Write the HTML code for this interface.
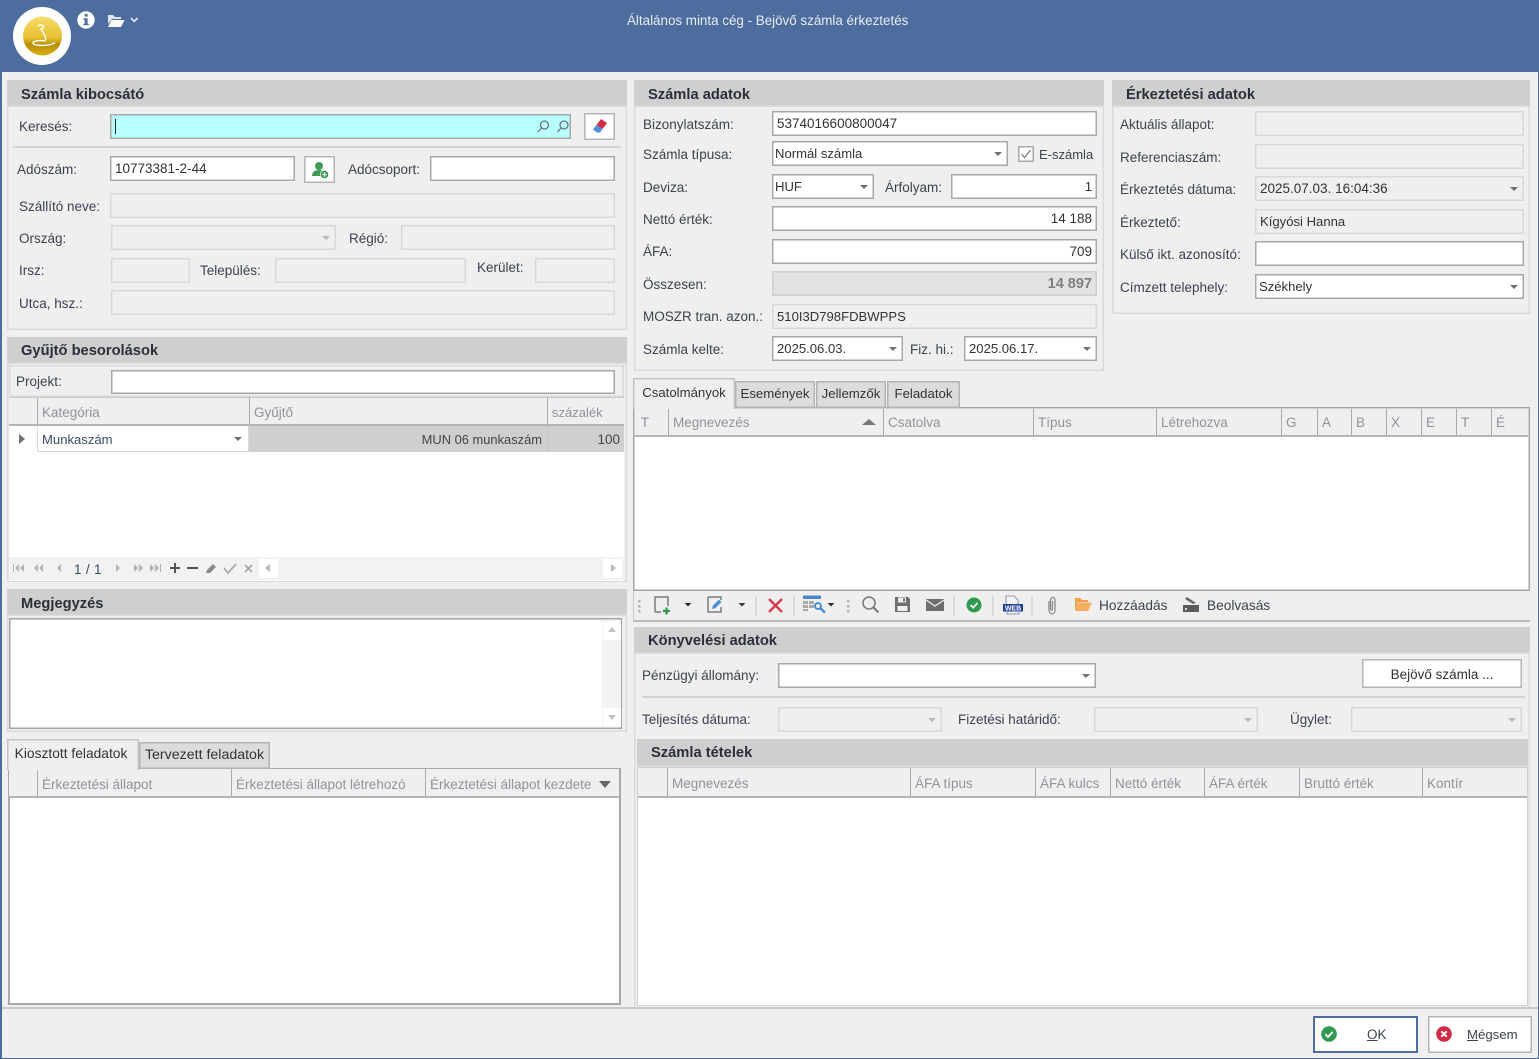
<!DOCTYPE html>
<html lang="hu"><head><meta charset="utf-8"><title>Általános minta cég - Bejövő számla érkeztetés</title>
<style>
html,body{margin:0;padding:0;width:1539px;height:1059px;overflow:hidden;background:#efefef}
body{font:13.5px/16px "Liberation Sans",sans-serif;color:#3c4250;position:relative}
div{position:absolute;box-sizing:border-box;white-space:nowrap}
svg{position:absolute;overflow:visible}
.p{box-shadow:inset 0 0 0 1.5px #dadada}
.h{background:#cfcfcf;font-weight:bold;font-size:14.7px;line-height:30px;color:#2a2f39;padding-left:14px;box-shadow:inset 0 -1.5px 0 #dcdcdc}
.t{height:16px;margin-top:1px}
.i,.d,.e{box-shadow:inset 0 0 0 1.5px #a8a8a8;background:#fff;line-height:26px;padding:0 5px;color:#333;font-size:13.1px}
.d{background:#efefef;box-shadow:inset 0 0 0 1.5px #d8d8d8}
.e{background:#efefef;box-shadow:inset 0 0 0 1.5px #cfcfcf}
.r{text-align:right}
.ar:after{content:"";position:absolute;right:6px;top:11px;border:4px solid transparent;border-top:4px solid #707070;border-bottom:0}
.dis:after{border-top-color:#b8b8b8}
.g{background:#fff;box-shadow:inset 0 0 0 2px #a9a9a9}
.gh{background:#efefef;border-bottom:2px solid #b4b4b4}
.c{top:0;bottom:0;border-left:1.5px solid #a9a9a9;color:#8f939c;padding-left:4px;line-height:27px}
.tab{background:#dcdcdc;box-shadow:inset 0 0 0 1.5px #b4b4b4;text-align:center;line-height:25px;color:#333;font-size:13.2px}
.tab.on{background:#efefef;line-height:29px}
.sep{background:#d2d2d2;height:2px}
.btn{background:#fff;box-shadow:inset 0 0 0 1.5px #b4b4b4}
</style></head><body>

<div style="left:0;top:0;width:1539px;height:72px;background:#4d6d9e"></div>
<div style="left:0;top:72px;width:1.5px;height:987px;background:#4d6d9e"></div>
<div style="left:1537.5px;top:72px;width:1.5px;height:987px;background:#4d6d9e"></div>
<div style="left:0;top:1057.5px;width:1539px;height:1.5px;background:#4d6d9e"></div>
<div style="left:627px;top:12.500px;color:#e6ecf5;font-size:13.4px">Általános minta cég - Bejövő számla érkeztetés</div>

<!-- logo -->
<svg style="left:13px;top:7px" width="60" height="60" viewBox="0 0 60 60">
<defs><linearGradient id="gd" x1="0" y1="0" x2="0" y2="1"><stop offset="0" stop-color="#f5dd6c"/><stop offset=".55" stop-color="#e6c030"/><stop offset=".72" stop-color="#b88e05"/><stop offset="1" stop-color="#d9b010"/></linearGradient></defs>
<circle cx="29" cy="29" r="29" fill="#fff"/><circle cx="29.500" cy="29" r="19.500" fill="url(#gd)"/>
<path d="M25 19q3-2 5 0q1 3-2 3q2 3 4 7q1 3 0 5M32 34c-6-1-12 0-12 2c0 3 14 3 19 1l3-1" fill="none" stroke="#fff" stroke-width="1.400"/>
</svg>
<svg style="left:77px;top:11px" width="18" height="18" viewBox="0 0 18 18"><circle cx="9" cy="9" r="8.700" fill="#fff"/><rect x="7.600" y="3" width="3" height="2.600" fill="#4d6d9e"/><path d="M6.500 7.200h4.100v5.600h1.200v1.500H6.500v-1.500h1.100V8.700H6.500z" fill="#4d6d9e"/></svg>
<svg style="left:107px;top:13px" width="33" height="15" viewBox="0 0 33 15"><path d="M1 2h5l2 2h6v2H5L1 11z" fill="#dfe6f0"/><path d="M4.500 7h13l-3.500 7H1z" fill="#fff"/><path d="M24 5l3.300 3.300L30.600 5" fill="none" stroke="#dfe6f0" stroke-width="1.700"/></svg>

<!-- Számla kibocsátó -->
<div class="p" style="left:7px;top:80px;width:620px;height:250px"></div>
<div class="h" style="left:7px;top:80px;width:620px;height:27px">Számla kibocsátó</div>
<div class="t" style="left:19px;top:118px">Keresés:</div>
<div class="i" style="left:110px;top:114px;width:461px;height:25px;background:#b8ffff"></div>
<div style="left:115px;top:119px;width:1px;height:15px;background:#222"></div>
<svg style="left:536px;top:119px" width="36" height="15" viewBox="0 0 36 15" fill="none" stroke="#6d7278" stroke-width="1.300"><circle cx="8.500" cy="6" r="4"/><path d="M5.500 9L2 13"/><circle cx="28" cy="6" r="4"/><path d="M25 9l-3.500 4"/></svg>
<div class="btn" style="left:584px;top:113px;width:31px;height:27px"></div>
<svg style="left:592px;top:118px" width="16" height="16" viewBox="0 0 16 16"><path d="M9 1l6 4-4.500 6-6-4z" fill="#d22b45"/><path d="M4.500 7l6 4-2.500 3.500H5L1 11.500z" fill="#4d8fd8"/></svg>
<div class="sep" style="left:13px;top:146px;width:608px"></div>
<div class="t" style="left:17px;top:161px">Adószám:</div>
<div class="i" style="left:110px;top:156px;width:185px;height:25px;font-size:13.500px">10773381-2-44</div>
<div class="btn" style="left:304px;top:156px;width:31px;height:27px"></div>
<svg style="left:311px;top:161px" width="19" height="19" viewBox="0 0 19 19"><circle cx="8" cy="5" r="4" fill="#3f9a55"/><path d="M1 15c0-4 3-6 7-6s6 2 6 6z" fill="#3f9a55"/><circle cx="13.500" cy="13.500" r="4.500" fill="#fff"/><circle cx="13.500" cy="13.500" r="3.800" fill="#2f9a4f"/><path d="M11.300 13.500h4.400M13.500 11.300v4.400" stroke="#fff" stroke-width="1.200"/></svg>
<div class="t" style="left:348px;top:161px">Adócsoport:</div>
<div class="i" style="left:430px;top:156px;width:185px;height:25px"></div>
<div class="t" style="left:19px;top:198px">Szállító neve:</div>
<div class="d" style="left:110px;top:193px;width:505px;height:25px"></div>
<div class="t" style="left:19px;top:230px">Ország:</div>
<div class="d ar dis" style="left:111px;top:225px;width:225px;height:25px"></div>
<div class="t" style="left:349px;top:230px">Régió:</div>
<div class="d" style="left:401px;top:225px;width:214px;height:25px"></div>
<div class="t" style="left:19px;top:262px">Irsz:</div>
<div class="d" style="left:111px;top:258px;width:79px;height:25px"></div>
<div class="t" style="left:200px;top:262px">Település:</div>
<div class="d" style="left:275px;top:258px;width:191px;height:25px"></div>
<div class="t" style="left:477px;top:259px">Kerület:</div>
<div class="d" style="left:535px;top:258px;width:80px;height:25px"></div>
<div class="t" style="left:19px;top:295px">Utca, hsz.:</div>
<div class="d" style="left:111px;top:290px;width:504px;height:25px"></div>

<!-- Gyűjtő -->
<div class="p" style="left:7px;top:337px;width:620px;height:245px"></div>
<div class="h" style="left:7px;top:337px;width:620px;height:27px;line-height:28px">Gyűjtő besorolások</div>
<div class="p" style="left:9px;top:365px;width:615px;height:32px"></div>
<div class="t" style="left:16px;top:373px">Projekt:</div>
<div class="i" style="left:111px;top:370px;width:504px;height:24px"></div>
<div style="left:9px;top:397px;width:615px;height:184px;background:#fff"></div>
<div class="gh" style="left:9px;top:397px;width:615px;height:29px;border-top:1.500px solid #c8c8c8">
<div class="c" style="left:28px;width:212px;line-height:29px">Kategória</div><div class="c" style="left:240px;width:298px;line-height:29px">Gyűjtő</div><div class="c" style="left:538px;width:77px;line-height:29px;font-size:13px">százalék</div></div>
<div style="left:19px;top:434px;border:5px solid transparent;border-left:6px solid #707070;border-right:0"></div>
<div style="left:37px;top:426px;width:212px;height:26px;border:1.500px solid #d8d8d8;border-top:0;line-height:27px;padding-left:4px;color:#3c4a6a;font-size:13.100px" class="ar">Munkaszám</div>
<div style="left:249px;top:426px;width:298px;height:26px;background:#cfcfcf;text-align:right;padding-right:5px;line-height:27px;color:#444;font-size:12.900px">MUN 06 munkaszám</div>
<div style="left:547px;top:426px;width:77px;height:26px;background:#cfcfcf;border-left:1px solid #c4c4c4;text-align:right;padding-right:4px;line-height:27px;color:#444">100</div>
<div style="left:9px;top:557px;width:615px;height:23px;background:#f2f2f2"></div>
<svg style="left:12px;top:562px" width="250" height="14" viewBox="0 0 250 14"><g fill="#b4b4b4"><path d="M1 2h1v8H1zM7 2v8L3 6zM12 2v8L8 6z"/><path d="M26 2v8l-4-4zM31 2v8l-4-4z"/><path d="M49 2v8l-4-4z"/><path d="M104 2v8l4-4zM122 2v8l4-4zM127 2v8l4-4zM138 2v8l4-4zM143 2v8l4-4zM148 2h1v8h-1z"/></g><path d="M158 6h10M163 1v10M175 6h11" stroke="#555" stroke-width="2"/><path d="M194 11l1-3 6-6 3 3-6 6z" fill="#888"/><path d="M212 6l4 5 8-9" fill="none" stroke="#a8a8a8" stroke-width="1.700"/><path d="M233 3l7 7M240 3l-7 7" stroke="#a8a8a8" stroke-width="1.700"/></svg>
<div class="t" style="left:74px;top:561px;font-size:13.500px;color:#3c4a6a;letter-spacing:.3px">1 / 1</div>
<div style="left:259px;top:559px;width:19px;height:19px;background:#fff"></div>
<div style="left:265px;top:564px;border:4.500px solid transparent;border-right:5px solid #b8b8b8;border-left:0"></div>
<div style="left:603px;top:559px;width:19px;height:19px;background:#fff"></div>
<div style="left:611px;top:564px;border:4.500px solid transparent;border-left:5px solid #b8b8b8;border-right:0"></div>

<!-- Megjegyzés -->
<div class="p" style="left:7px;top:589px;width:620px;height:143px"></div>
<div class="h" style="left:7px;top:589px;width:620px;height:27px">Megjegyzés</div>
<div class="g" style="left:9px;top:618px;width:613px;height:111px;box-shadow:inset 0 0 0 1.500px #a4a4a4"></div>
<div style="left:602px;top:620px;width:19px;height:107px;background:#f3f3f3"></div>
<div style="left:603px;top:621px;width:18px;height:19px;background:#fff"></div>
<div style="left:603px;top:708px;width:18px;height:19px;background:#fff"></div>
<div style="left:608px;top:627px;border:4px solid transparent;border-bottom:5px solid #c4c4c4;border-top:0"></div>
<div style="left:608px;top:715px;border:4px solid transparent;border-top:5px solid #c4c4c4;border-bottom:0"></div>

<!-- feladatok -->
<div class="g" style="left:8px;top:768px;width:613px;height:237px"></div>
<div class="gh" style="left:9px;top:769px;width:610px;height:29px">
<div class="c" style="left:28px;width:194px;line-height:31px">Érkeztetési állapot</div><div class="c" style="left:222px;width:194px;line-height:31px">Érkeztetési állapot létrehozó</div><div class="c" style="left:416px;width:194px;line-height:31px">Érkeztetési állapot kezdete</div></div>
<div style="left:599px;top:781px;border:6px solid transparent;border-top:7px solid #666;border-bottom:0"></div>
<div class="tab on" style="left:7px;top:739px;width:132px;height:31px;font-size:13.800px;padding-right:4px;box-shadow:inset 1.500px 1.500px 0 #c4c4c4,inset -1.500px 0 0 #c4c4c4">Kiosztott feladatok</div>
<div class="tab" style="left:139px;top:742px;width:131px;height:27px;font-size:14.200px;line-height:26px">Tervezett feladatok</div>

<!-- Számla adatok -->
<div class="p" style="left:634px;top:80px;width:470px;height:291px"></div>
<div class="h" style="left:634px;top:80px;width:470px;height:27px">Számla adatok</div>
<div class="t" style="left:643px;top:116px">Bizonylatszám:</div>
<div class="i" style="left:772px;top:111px;width:325px;height:25px;font-size:13.500px">5374016600800047</div>
<div class="t" style="left:643px;top:146px">Számla típusa:</div>
<div class="i ar" style="left:772px;top:141px;width:236px;height:25px;padding:0 3px">Normál számla</div>
<div style="left:1018px;top:146px;width:16px;height:16px;background:#fff;box-shadow:inset 0 0 0 1.500px #a8a8a8"></div>
<svg style="left:1018px;top:146px" width="16" height="16"><path d="M3.500 8l3 3.500L12.500 4" fill="none" stroke="#777" stroke-width="1.200"/></svg>
<div class="t" style="left:1039px;top:146px;font-size:13px">E-számla</div>
<div class="t" style="left:643px;top:179px">Deviza:</div>
<div class="i ar" style="left:772px;top:174px;width:102px;height:25px;padding:0 3px">HUF</div>
<div class="t" style="left:885px;top:179px">Árfolyam:</div>
<div class="i r" style="left:951px;top:174px;width:146px;height:25px">1</div>
<div class="t" style="left:643px;top:211px">Nettó érték:</div>
<div class="i r" style="left:772px;top:206px;width:325px;height:25px;font-size:13.500px">14 188</div>
<div class="t" style="left:643px;top:243px">ÁFA:</div>
<div class="i r" style="left:772px;top:239px;width:325px;height:25px;font-size:13.500px">709</div>
<div class="t" style="left:643px;top:276px">Összesen:</div>
<div class="e r" style="left:772px;top:271px;width:325px;height:25px;background:#e2e2e2;font-weight:bold;color:#7f7f7f;font-size:14.500px">14 897</div>
<div class="t" style="left:643px;top:308px">MOSZR tran. azon.:</div>
<div class="d" style="left:772px;top:304px;width:325px;height:25px">510I3D798FDBWPPS</div>
<div class="t" style="left:643px;top:341px">Számla kelte:</div>
<div class="i ar" style="left:772px;top:336px;width:131px;height:25px">2025.06.03.</div>
<div class="t" style="left:910px;top:341px">Fiz. hi.:</div>
<div class="i ar" style="left:964px;top:336px;width:133px;height:25px">2025.06.17.</div>

<!-- Érkeztetési adatok -->
<div class="p" style="left:1112px;top:80px;width:418px;height:234px"></div>
<div class="h" style="left:1112px;top:80px;width:418px;height:27px">Érkeztetési adatok</div>
<div class="t" style="left:1120px;top:116px">Aktuális állapot:</div>
<div class="d" style="left:1255px;top:111px;width:269px;height:25px"></div>
<div class="t" style="left:1120px;top:149px">Referenciaszám:</div>
<div class="d" style="left:1255px;top:144px;width:269px;height:25px"></div>
<div class="t" style="left:1120px;top:181px">Érkeztetés dátuma:</div>
<div class="d ar" style="left:1255px;top:176px;width:269px;height:25px;font-size:13.500px">2025.07.03. 16:04:36</div>
<div class="t" style="left:1120px;top:214px">Érkeztető:</div>
<div class="d" style="left:1255px;top:209px;width:269px;height:25px">Kígyósi Hanna</div>
<div class="t" style="left:1120px;top:246px">Külső ikt. azonosító:</div>
<div class="i" style="left:1255px;top:241px;width:269px;height:25px"></div>
<div class="t" style="left:1120px;top:279px">Címzett telephely:</div>
<div class="i ar" style="left:1255px;top:274px;width:269px;height:25px;padding:0 4px">Székhely</div>

<!-- Csatolmányok -->
<div class="g" style="left:633px;top:407px;width:897px;height:184px;box-shadow:inset 0 0 0 1.500px #a4a4a4"></div>
<div class="gh" style="left:635px;top:409px;width:893px;height:28px">
<div class="c" style="left:-2px;width:35px;border-left:0">&nbsp;T</div><div class="c" style="left:33px;width:215px">Megnevezés</div><div class="c" style="left:248px;width:150px">Csatolva</div><div class="c" style="left:398px;width:123px">Típus</div><div class="c" style="left:521px;width:125px">Létrehozva</div><div class="c" style="left:646px;width:36px">G</div><div class="c" style="left:682px;width:34px">A</div><div class="c" style="left:716px;width:35px">B</div><div class="c" style="left:751px;width:35px">X</div><div class="c" style="left:786px;width:35px">E</div><div class="c" style="left:821px;width:35px">T</div><div class="c" style="left:856px;width:37px">É</div></div>
<div style="left:862px;top:419px;border:7px solid transparent;border-bottom:6px solid #777;border-top:0"></div>
<div class="tab on" style="left:633px;top:378px;width:102px;height:31px;box-shadow:inset 1.500px 1.500px 0 #c4c4c4,inset -1.500px 0 0 #c4c4c4">Csatolmányok</div>
<div class="tab" style="left:735px;top:381px;width:80px;height:27px">Események</div>
<div class="tab" style="left:816px;top:381px;width:70px;height:27px">Jellemzők</div>
<div class="tab" style="left:887px;top:381px;width:73px;height:27px">Feladatok</div>

<!-- toolbar -->
<div style="left:633px;top:591px;width:897px;height:31px;border-bottom:2px solid #b8b8b8;border-left:1.500px solid #c8c8c8"></div>
<svg style="left:633px;top:591px" width="660" height="30" viewBox="0 0 660 30">
<g fill="#b4b4b4"><rect x="5" y="9" width="2.500" height="2.500"/><rect x="5" y="14" width="2.500" height="2.500"/><rect x="5" y="19" width="2.500" height="2.500"/><rect x="214" y="9" width="2.500" height="2.500"/><rect x="214" y="14" width="2.500" height="2.500"/><rect x="214" y="19" width="2.500" height="2.500"/></g>
<path d="M28 21V6h13v9" fill="none" stroke="#7c7c7c" stroke-width="1.500" transform="translate(-6 0)"/><path d="M22 21h6" stroke="#7c7c7c" stroke-width="1.500"/><path d="M30 20h7M33.500 16.500v7" stroke="#2f9a4f" stroke-width="2.300"/>
<path d="M51.500 12h7L55 15.500z" fill="#333"/>
<path d="M75 6h13v3M75 6v15h13v-5" fill="none" stroke="#7c7c7c" stroke-width="1.500"/><path d="M79 18l1-3.500 6-6 2.500 2.500-6 6z" fill="#4a8fd6"/>
<path d="M105.500 12h7L109 15.500z" fill="#333"/>
<path d="M123 5v20M161 5v20M321 5v20M360 5v20M399 5v20" stroke="#cfcfcf" stroke-width="1.300"/>
<path d="M136 8l13 13M149 8l-13 13" stroke="#d63c4a" stroke-width="2.400"/>
<rect x="170" y="4.500" width="18" height="3.500" fill="#4c86cc"/><path d="M170 10h5v3h-5zM176 10h5v3h-5zM170 14h5v3h-5zM176 14h5v3h-5zM170 18h5v2h-5z" fill="#a8a8a8"/><circle cx="185" cy="15" r="3" fill="none" stroke="#3c84d0" stroke-width="1.700"/><path d="M187 17l5 4.500" stroke="#3c84d0" stroke-width="2.200"/>
<path d="M194.500 12h7L198 15.500z" fill="#333"/>
<circle cx="236" cy="12" r="6" fill="none" stroke="#777" stroke-width="1.500"/><path d="M240.500 16.500l5 5" stroke="#777" stroke-width="2"/>
<path d="M262 6h13l2 2v13h-15z" fill="#6e6e6e"/><rect x="265" y="6.500" width="8" height="5" fill="#efefef"/><rect x="264.500" y="15" width="10" height="5" fill="#efefef"/><rect x="270" y="7.500" width="2" height="3" fill="#6e6e6e"/>
<rect x="293" y="8" width="18" height="12" fill="#6e6e6e"/><path d="M293 9l9 6 9-6" fill="none" stroke="#efefef" stroke-width="1.300"/>
<circle cx="341" cy="14" r="7.500" fill="#2f9a4f"/><path d="M337.500 14l2.700 2.700 4.300-4.700" fill="none" stroke="#fff" stroke-width="1.700"/>
<path d="M373 5h8l4 4v5h-12z" fill="#f4f4f4" stroke="#8a96b8"/><rect x="370" y="13" width="20" height="7.500" fill="#1d3f9c"/><path d="M374 21v2h12v-2" fill="#f4f4f4" stroke="#8a96b8"/><text x="380" y="19.500" font-size="7" font-weight="bold" fill="#fff" text-anchor="middle" font-family="Liberation Sans">WEB</text>
<path d="M416 10v9c0 5 6 5 6 0V9c0-3.500-4.500-3.500-4.500 0v9c0 1.500 2 1.500 2 0v-8" fill="none" stroke="#8a8a8a" stroke-width="1.300"/>
<path d="M442 7h5l2 2h6v2h-10l-3 9z" fill="#f0a24a"/><path d="M445 11.500h14l-4 8.500h-13z" fill="#f6ad5c"/>
<path d="M554 6l9 6-3 1-8-5z" fill="#666"/><path d="M550 14h16v7h-16z" fill="#5c5c5c"/><circle cx="553" cy="18" r="1" fill="#fff"/>
</svg>
<div class="t" style="left:1099px;top:597px;font-size:13.700px">Hozzáadás</div>
<div class="t" style="left:1207px;top:597px;font-size:13.700px">Beolvasás</div>

<!-- Könyvelési -->
<div class="p" style="left:634px;top:627px;width:896px;height:382px"></div>
<div class="h" style="left:634px;top:627px;width:896px;height:27px;line-height:28px">Könyvelési adatok</div>
<div class="t" style="left:642px;top:667px">Pénzügyi állomány:</div>
<div class="i ar" style="left:778px;top:663px;width:318px;height:25px"></div>
<div class="btn" style="left:1362px;top:659px;width:160px;height:29px;text-align:center;line-height:31px;color:#333">Bejövő számla ...</div>
<div class="sep" style="left:642px;top:696px;width:883px"></div>
<div class="t" style="left:642px;top:711px">Teljesítés dátuma:</div>
<div class="d ar dis" style="left:778px;top:707px;width:164px;height:25px"></div>
<div class="t" style="left:958px;top:711px">Fizetési határidő:</div>
<div class="d ar dis" style="left:1094px;top:707px;width:164px;height:25px"></div>
<div class="t" style="left:1290px;top:711px">Ügylet:</div>
<div class="d ar dis" style="left:1351px;top:707px;width:171px;height:25px"></div>
<div class="h" style="left:637px;top:739px;width:891px;height:28px;line-height:28px">Számla tételek</div>
<div style="left:637px;top:767px;width:891px;height:239px;background:#fff;border:1.500px solid #d0d0d0"></div>
<div class="gh" style="left:638px;top:768px;width:889px;height:30px">
<div class="c" style="left:29px;width:243px;line-height:31px">Megnevezés</div><div class="c" style="left:272px;width:125px;line-height:31px">ÁFA típus</div><div class="c" style="left:397px;width:75px;line-height:31px">ÁFA kulcs</div><div class="c" style="left:472px;width:94px;line-height:31px">Nettó érték</div><div class="c" style="left:566px;width:95px;line-height:31px">ÁFA érték</div><div class="c" style="left:661px;width:123px;line-height:31px">Bruttó érték</div><div class="c" style="left:784px;width:105px;line-height:31px">Kontír</div></div>

<!-- bottom -->
<div style="left:1.500px;top:1007px;width:1536px;height:2px;background:#c8c8c8"></div>
<div class="btn" style="left:1313px;top:1016px;width:105px;height:37px;box-shadow:inset 0 0 0 2px #4d6d9e"></div>
<svg style="left:1321px;top:1026px" width="16" height="16" viewBox="0 0 16 16"><circle cx="8" cy="8" r="7.800" fill="#2f9a4f"/><path d="M4.300 8.200l2.700 2.700 4.700-5" fill="none" stroke="#fff" stroke-width="1.800"/></svg>
<div class="t" style="left:1367px;top:1026px"><span style="text-decoration:underline">O</span>K</div>
<div class="btn" style="left:1428px;top:1016px;width:104px;height:37px"></div>
<svg style="left:1436px;top:1026px" width="16" height="16" viewBox="0 0 16 16"><circle cx="8" cy="8" r="7.800" fill="#cf2a44"/><path d="M5.300 5.300l5.400 5.400M10.700 5.300l-5.400 5.400" stroke="#fff" stroke-width="2"/></svg>
<div class="t" style="left:1467px;top:1026px;font-size:13.200px"><span style="text-decoration:underline">M</span>égsem</div>
</body></html>
